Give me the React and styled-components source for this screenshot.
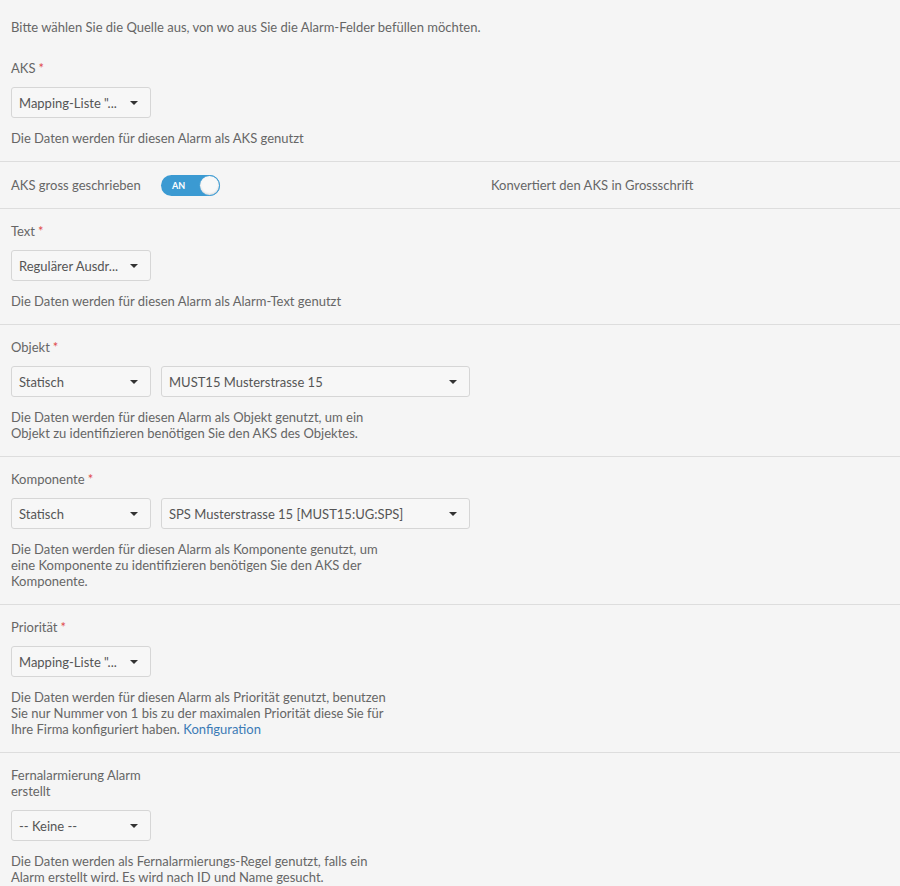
import styled, { createGlobalStyle } from "styled-components";

const GlobalStyle = createGlobalStyle`
  html, body {
    margin: 0;
    background: #f5f5f5;
  }
  body {
    font-family: Lato, "Liberation Sans", sans-serif;
    font-size: 13px;
    color: #666;
  }
`;

const Page = styled.div`
  width: 900px;
`;

const Intro = styled.p`
  margin: 0;
  padding: 19px 11px 11px;
  line-height: 16px;
`;

const Section = styled.div`
  padding: 14px 11px 15px;
  border-bottom: ${(p) => (p.last ? "none" : "1px solid #ddd")};
`;

const Label = styled.div`
  width: 140px;
  line-height: 16px;
  margin-bottom: 11px;
`;

const Required = styled.span`
  color: #e04b4b;
  margin-left: 3px;
`;

const Row = styled.div`
  display: flex;
  gap: 10px;
`;

const Select = styled.div`
  box-sizing: border-box;
  position: relative;
  width: ${(p) => p.width || 140}px;
  height: 31px;
  padding: 0 28px 0 7px;
  display: flex;
  align-items: center;
  border: 1px solid #d6d6d6;
  border-radius: 3px;
  background: #f7f7f7;
  color: #555;
  white-space: nowrap;
  overflow: hidden;
  &::after {
    content: "";
    position: absolute;
    right: 12px;
    top: 13px;
    border-left: 4px solid transparent;
    border-right: 4px solid transparent;
    border-top: 4px solid #333;
  }
`;

const Help = styled.p`
  margin: 12px 0 0;
  max-width: 376px;
  line-height: 16px;
`;

const Link = styled.a`
  color: #3c7bb5;
  text-decoration: none;
`;

const ToggleRow = styled.div`
  display: grid;
  grid-template-columns: 140px 320px auto;
  column-gap: 10px;
  align-items: center;
  height: 46px;
  padding: 0 11px;
  border-bottom: 1px solid #ddd;
`;

const Toggle = styled.div`
  position: relative;
  width: 59px;
  height: 21px;
  border-radius: 11px;
  background: #3b9ad2;
  display: flex;
  align-items: center;
  padding-left: 11px;
  box-sizing: border-box;
  color: #fff;
  font-size: 9px;
  font-weight: bold;
  &::after {
    content: "";
    position: absolute;
    right: 0;
    top: 0;
    width: 19px;
    height: 19px;
    border-radius: 50%;
    background: #f8f8f8;
    border: 1px solid #3b9ad2;
    box-shadow: inset 0 -1px 2px rgba(0, 0, 0, 0.12);
  }
`;

const Field = ({ label, required, selects, children, last }) => (
  <Section last={last}>
    <Label>
      {label}
      {required && <Required>*</Required>}
    </Label>
    <Row>
      {selects.map((s, i) => (
        <Select key={i} width={s.width}>
          {s.value}
        </Select>
      ))}
    </Row>
    <Help>{children}</Help>
  </Section>
);

export default function App() {
  return (
    <Page>
      <GlobalStyle />
      <Intro>
        Bitte wählen Sie die Quelle aus, von wo aus Sie die Alarm-Felder
        befüllen möchten.
      </Intro>
      <Field label="AKS" required selects={[{ value: 'Mapping-Liste "...' }]}>
        Die Daten werden für diesen Alarm als AKS genutzt
      </Field>
      <ToggleRow>
        <span>AKS gross geschrieben</span>
        <Toggle>AN</Toggle>
        <span>Konvertiert den AKS in Grossschrift</span>
      </ToggleRow>
      <Field label="Text" required selects={[{ value: "Regulärer Ausdr..." }]}>
        Die Daten werden für diesen Alarm als Alarm-Text genutzt
      </Field>
      <Field
        label="Objekt"
        required
        selects={[
          { value: "Statisch" },
          { value: "MUST15 Musterstrasse 15", width: 309 },
        ]}
      >
        Die Daten werden für diesen Alarm als Objekt genutzt, um ein Objekt zu
        identifizieren benötigen Sie den AKS des Objektes.
      </Field>
      <Field
        label="Komponente"
        required
        selects={[
          { value: "Statisch" },
          { value: "SPS Musterstrasse 15 [MUST15:UG:SPS]", width: 309 },
        ]}
      >
        Die Daten werden für diesen Alarm als Komponente genutzt, um eine
        Komponente zu identifizieren benötigen Sie den AKS der Komponente.
      </Field>
      <Field label="Priorität" required selects={[{ value: 'Mapping-Liste "...' }]}>
        Die Daten werden für diesen Alarm als Priorität genutzt, benutzen Sie
        nur Nummer von 1 bis zu der maximalen Priorität diese Sie für Ihre Firma
        konfiguriert haben. <Link href="#">Konfiguration</Link>
      </Field>
      <Field
        label="Fernalarmierung Alarm erstellt"
        selects={[{ value: "-- Keine --" }]}
        last
      >
        Die Daten werden als Fernalarmierungs-Regel genutzt, falls ein Alarm
        erstellt wird. Es wird nach ID und Name gesucht.
      </Field>
    </Page>
  );
}
